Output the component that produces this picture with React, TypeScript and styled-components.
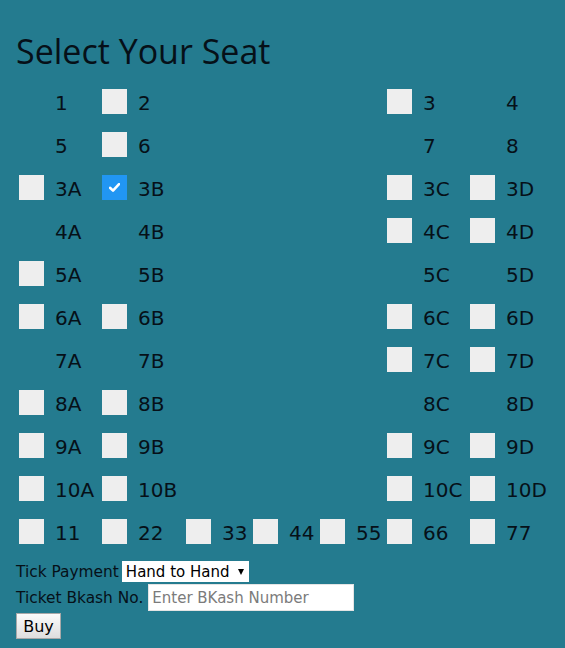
import React, { useState } from "react";
import styled, { createGlobalStyle } from "styled-components";

const Global = createGlobalStyle`
  html, body { margin: 0; padding: 0; background: #247b8f; }
  body { font-family: "DejaVu Sans", Verdana, sans-serif; color: #000; }
`;

const Page = styled.div`
  min-height: 100vh;
  box-sizing: border-box;
  padding: 0 16px;
  background: #247b8f;
`;

const Title = styled.h1`
  margin: 0;
  padding-top: 29px;
  font-family: "Open Sans", "Noto Sans", sans-serif;
  font-weight: 400;
  font-size: 34px;
  line-height: 44px;
  height: 51px;
  color: #061018;
`;

const SeatGrid = styled.div`
  display: grid;
  grid-template-columns: 83px 84px 67px 67px 67px 83px auto;
  grid-auto-rows: 43px;
  padding-left: 3px;
`;

const SeatCell = styled.label<{ $col: number }>`
  grid-column: ${(p) => p.$col};
  display: flex;
  align-items: center;
  cursor: pointer;
`;

const Box = styled.span<{ $hidden?: boolean; $checked?: boolean }>`
  width: 25px;
  height: 25px;
  flex: none;
  display: flex;
  align-items: center;
  justify-content: center;
  background: ${(p) => (p.$checked ? "#2196f3" : "#eeeeee")};
  visibility: ${(p) => (p.$hidden ? "hidden" : "visible")};
`;

const SeatName = styled.span`
  margin-left: 11px;
  font-family: "DejaVu Sans", Verdana, sans-serif;
  font-size: 20px;
  line-height: 24px;
  color: #061018;
  padding-top: 2px;
`;

const Form = styled.div`
  margin-top: 8px;
  display: flex;
  flex-direction: column;
  align-items: flex-start;
  gap: 2px;
`;

const FieldRow = styled.div<{ $gap: number }>`
  display: flex;
  align-items: center;
  gap: ${(p) => p.$gap}px;
`;

const FieldLabel = styled.span`
  font-family: "DejaVu Sans", Verdana, sans-serif;
  font-size: 15.4px;
  color: #061018;
`;

const SelectWrap = styled.div`
  position: relative;
  width: 127px;
  height: 21px;
`;

const Select = styled.select`
  appearance: none;
  -webkit-appearance: none;
  width: 100%;
  height: 100%;
  border: none;
  border-radius: 0;
  background: #fff;
  padding: 0 0 0 4px;
  margin: 0;
  font-family: "DejaVu Sans", Verdana, sans-serif;
  font-size: 15px;
  color: #000;
  outline: none;
`;

const Caret = styled.span`
  position: absolute;
  right: 5px;
  top: 8px;
  width: 0;
  height: 0;
  border-left: 3px solid transparent;
  border-right: 3px solid transparent;
  border-top: 6px solid #000;
  pointer-events: none;
`;

const TextInput = styled.input`
  width: 206px;
  height: 27px;
  box-sizing: border-box;
  border: 1px solid #e4e4e4;
  background: #fff;
  padding: 0 3px;
  margin: 0;
  font-family: "DejaVu Sans", Verdana, sans-serif;
  font-size: 15px;
  outline: none;
  &::placeholder { color: #7b7b7b; }
`;

const BuyButton = styled.button`
  width: 45px;
  height: 26px;
  box-sizing: border-box;
  margin: 0;
  padding: 0;
  border: 1px solid #a9a9a9;
  border-radius: 0;
  background: linear-gradient(#fbfbfb, #dedede);
  font-family: "DejaVu Sans", Verdana, sans-serif;
  font-size: 16px;
  color: #000;
`;

type Seat = { name: string; col: number; hidden?: boolean };

const rows: Seat[][] = [
  [{ name: "1", col: 1, hidden: true }, { name: "2", col: 2 }, { name: "3", col: 6 }, { name: "4", col: 7, hidden: true }],
  [{ name: "5", col: 1, hidden: true }, { name: "6", col: 2 }, { name: "7", col: 6, hidden: true }, { name: "8", col: 7, hidden: true }],
  [{ name: "3A", col: 1 }, { name: "3B", col: 2 }, { name: "3C", col: 6 }, { name: "3D", col: 7 }],
  [{ name: "4A", col: 1, hidden: true }, { name: "4B", col: 2, hidden: true }, { name: "4C", col: 6 }, { name: "4D", col: 7 }],
  [{ name: "5A", col: 1 }, { name: "5B", col: 2, hidden: true }, { name: "5C", col: 6, hidden: true }, { name: "5D", col: 7, hidden: true }],
  [{ name: "6A", col: 1 }, { name: "6B", col: 2 }, { name: "6C", col: 6 }, { name: "6D", col: 7 }],
  [{ name: "7A", col: 1, hidden: true }, { name: "7B", col: 2, hidden: true }, { name: "7C", col: 6 }, { name: "7D", col: 7 }],
  [{ name: "8A", col: 1 }, { name: "8B", col: 2 }, { name: "8C", col: 6, hidden: true }, { name: "8D", col: 7, hidden: true }],
  [{ name: "9A", col: 1 }, { name: "9B", col: 2 }, { name: "9C", col: 6 }, { name: "9D", col: 7 }],
  [{ name: "10A", col: 1 }, { name: "10B", col: 2 }, { name: "10C", col: 6 }, { name: "10D", col: 7 }],
  ["11", "22", "33", "44", "55", "66", "77"].map((n, i) => ({ name: n, col: i + 1 })),
];

const Check = () => (
  <svg width="11" height="9" viewBox="0 0 11 9">
    <path d="M1 4.8 L4 7.6 L10 1.2" fill="none" stroke="#fff" strokeWidth="2.6" strokeLinecap="round" strokeLinejoin="round" />
  </svg>
);

export default function App() {
  const [checked, setChecked] = useState<Record<string, boolean>>({ "3B": true });
  return (
    <Page>
      <Global />
      <Title>Select Your Seat</Title>
      <SeatGrid>
        {rows.flat().map((s, i) => (
          <SeatCell
            key={i}
            $col={s.col}
            onClick={() => !s.hidden && setChecked((c) => ({ ...c, [s.name]: !c[s.name] }))}
          >
            <Box $hidden={s.hidden} $checked={!!checked[s.name]}>
              {checked[s.name] && <Check />}
            </Box>
            <SeatName>{s.name}</SeatName>
          </SeatCell>
        ))}
      </SeatGrid>
      <Form>
        <FieldRow $gap={3}>
          <FieldLabel>Tick Payment</FieldLabel>
          <SelectWrap>
            <Select defaultValue="hand">
              <option value="hand">Hand to Hand</option>
              <option value="bkash">Bkash</option>
            </Select>
            <Caret />
          </SelectWrap>
        </FieldRow>
        <FieldRow $gap={5}>
          <FieldLabel>Ticket Bkash No.</FieldLabel>
          <TextInput placeholder="Enter BKash Number" />
        </FieldRow>
        <BuyButton>Buy</BuyButton>
      </Form>
    </Page>
  );
}
